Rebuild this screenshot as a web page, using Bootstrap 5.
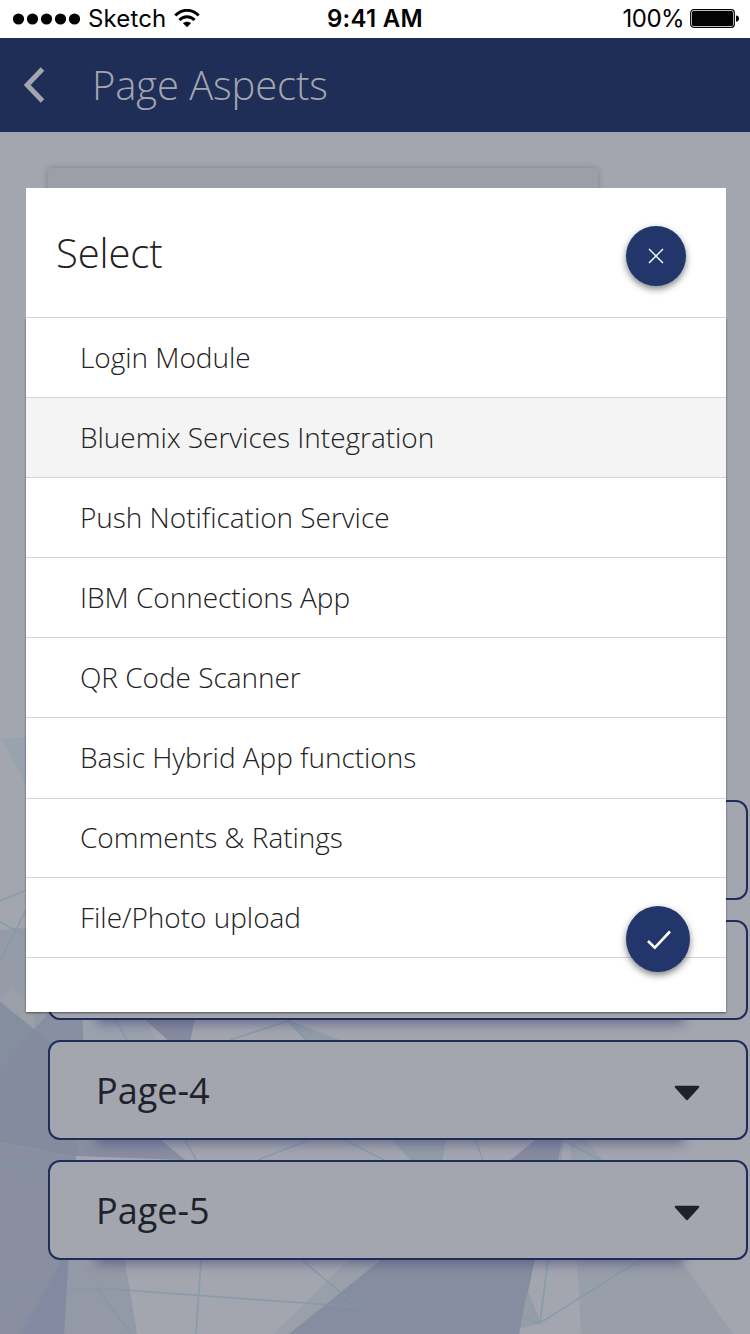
<!DOCTYPE html>
<html lang="en">
<head>
<meta charset="utf-8">
<meta name="viewport" content="width=device-width, initial-scale=1">
<title>Page Aspects</title>
<link href="https://cdn.jsdelivr.net/npm/bootstrap@5.3.0/dist/css/bootstrap.min.css" rel="stylesheet">
<style>
  body { font-family: "Open Sans", sans-serif; background: #a3a6af; }
  .screen { width: 750px; height: 1334px; }
  .status { height: 38px; font: 400 24px/38px Inter, sans-serif; color: #030303; padding: 0 11px 0 13px; }
  .status .carrier { letter-spacing: .15px; margin: 0 7px 0 8px; }
  .status .clock { left: 0; right: 0; font-weight: 600; letter-spacing: .3px; }
  .status .power { letter-spacing: -.55px; margin-right: 6px; }
  .titlebar { height: 94px; background: #1f2e57; color: #a3a6af; padding-left: 23px; }
  .titlebar h1 { font-size: 40px; font-weight: 300; line-height: 54px; letter-spacing: -.12px; margin: 0 0 0 47px; }
  .backdrop { left: 0; top: 0; width: 100%; height: 100%; }
  .content { height: 1202px; padding: 36px 2px 0 48px; }
  .preview { width: 550px; height: 612px; background: #9c9fa8; border-radius: 4px; box-shadow: 0 0 6px rgba(40,44,60,.28); margin-bottom: 20px; }
  .page-row { height: 100px; border: 2px solid #1f2e57; border-radius: 12px; background: #a3a6af; color: #1e222b; padding: 2px 46px 0 46px; font-size: 36px; }
  .page-row svg { margin-top: 3px; }
  .page-wrap { isolation: isolate; }
  .page-wrap::before { content: ""; position: absolute; z-index: -1; left: 48px; right: 64px; top: 30px; bottom: -4px; background: rgba(70,74,118,.6); filter: blur(6px); }
  .sheet { left: 26px; top: 188px; width: 700px; height: 824px; color: #222; }
  .sheet-head { height: 130px; background: #fff; border-bottom: 1px solid #d3d4d5; padding: 0 40px 0 30px; }
  .sheet-head h2 { font-size: 40px; font-weight: 300; line-height: 54px; letter-spacing: -.12px; margin: 0; }
  .sheet-body { height: 694px; background: #fff; box-shadow: 0 1px 2px rgba(0,0,0,.5); clip-path: inset(0 -4px -4px -4px); }
  .choice { height: 80px; border-bottom: 1px solid #d3d4d5; padding-left: 54px; font-size: 28px; font-weight: 300; line-height: 79px; letter-spacing: -.03px; font-variant-ligatures: common-ligatures; }
  .choice.tall { height: 81px; }
  .choice.short { height: 79px; line-height: 77px; }
  .choice.picked { background: #f4f4f4; }
  .fab { width: 60px; height: 60px; background: #23366b; border-radius: 50%; box-shadow: 0 3px 7px rgba(0,0,0,.5); }
  .fab-close { margin-top: 7px; }
  .fab-done { width: 64px; height: 66px; left: 600px; top: 718px; padding: 1px 0 0 1px; }
</style>
</head>
<body>
<div class="screen position-relative overflow-hidden d-flex flex-column">
  <!-- polygon artwork -->
  <svg class="backdrop position-absolute" viewBox="0 0 750 1334">
    <g>
      <path d="M2 739L26 737V784Z" fill="#98a3ae"/>
      <path d="M0 930L100 920V1060H0Z" fill="#969ca7"/>
      <path d="M83 1012H143L165 1060H83Z" fill="#9ba2ae"/>
      <path d="M0 1002L34 1029L0 1067Z" fill="#858e9f"/>
      <path d="M0 1000L34 1029V1012L12 985Z" fill="#9b9fa8"/>
      <path d="M0 1067L34 1029L50 1012H83V1130L76 1157L0 1142Z" fill="#858b9f"/>
      <path d="M34 1029L50 1012H83V1060H72Z" fill="#888fa3"/>
      <path d="M0 1142L76 1157L66 1334H0Z" fill="#898ea1"/>
      <path d="M65 1250H123L137 1334H62Z" fill="#9399a6"/>
      <path d="M62 1258L69 1250L64 1334H20Z" fill="#8389a0"/>
      <path d="M143 1018H195L190 1042H170Z" fill="#868ba0"/>
      <path d="M78 1135H155L185 1160L76 1156Z" fill="#888da1"/>
      <path d="M288 1020L345 1042H306Z" fill="#929ba8"/>
      <path d="M392 1140H446L442 1162H412Z" fill="#929ca8"/>
      <path d="M535 1140H562L558 1162H508Z" fill="#868ba0"/>
      <path d="M570 1140H588L603 1162H571Z" fill="#98a0aa"/>
      <path d="M350 1259H385L290 1334H273Z" fill="#99a0aa"/>
      <path d="M382 1259H535L519 1334H289Z" fill="#868da0"/>
      <path d="M577 1259H680L733 1334H581Z" fill="#999fa9"/>
      <path d="M527 1293L541 1323L520 1329Z" fill="#959da8"/>
    </g>
    <g fill="none" stroke="#7f98ac" stroke-width="1.7" opacity=".7">
      <path d="M0 901L26 890M0 922L26 936M0 961L26 910M0 1166L50 1169M116 1020L127 1041M230 1040L288 1021L306 1040M185 1140L197 1161M258 1160L311 1139M343 1139L384 1160M475 1139L483 1160M563 1139L560 1160M563 1140L602 1161"/>
      <path d="M97 1288L358 1307L302 1260M97 1288L131 1334M201 1260L196 1334M548 1259L540 1323L640 1260"/>
      <path opacity=".5" d="M0 1296L97 1288M60 1262L22 1334M358 1307L375 1280M527 1290L540 1323L523 1317"/>
    </g>
  </svg>

  <div class="status bg-white d-flex align-items-center position-relative">
    <svg width="67" height="12" viewBox="0 0 67 12"><g fill="#030303"><circle cx="5.5" cy="6" r="5.6"/><circle cx="19.5" cy="6" r="5.6"/><circle cx="33.5" cy="6" r="5.6"/><circle cx="47.5" cy="6" r="5.6"/><circle cx="61.5" cy="6" r="5.6"/></g></svg>
    <span class="carrier">Sketch</span>
    <svg width="28" height="20" viewBox="0 0 28 20"><g fill="none" stroke="#030303" stroke-width="2.9"><path d="M2.3 6.6C9 -.5 19 -.5 25.7 6.6"/><path d="M6.4 11.1C10.5 6.6 17.5 6.6 21.6 11.1"/></g><path d="M10 14.3C12 12.3 16 12.3 18 14.3L14 18.2Z" fill="#030303"/></svg>
    <span class="clock position-absolute text-center">9:41 AM</span>
    <span class="power ms-auto">100%</span>
    <svg width="49" height="20" viewBox="0 0 49 20"><rect x=".7" y=".7" width="43.6" height="17.6" rx="3" fill="none" stroke="#030303" stroke-width="1.2"/><rect x="2" y="2" width="41" height="15" rx="1.5" fill="#030303"/><path d="M46 6.5C48 6.5 49 7.5 49 9.5S48 12.7 46 12.7Z" fill="#030303"/></svg>
  </div>

  <header class="titlebar d-flex align-items-center position-relative">
    <svg width="22" height="36" viewBox="0 0 22 36"><path d="M19.5 2L4.2 18L19.5 34" fill="none" stroke="#a3a6af" stroke-width="5"/></svg>
    <h1>Page Aspects</h1>
  </header>

  <main class="content position-relative">
    <div class="preview"></div>
    <div class="d-grid" style="gap:20px">
      <div class="page-wrap position-relative"><div class="page-row"></div></div>
      <div class="page-wrap position-relative"><div class="page-row"></div></div>
      <div class="page-wrap position-relative"><div class="page-row d-flex align-items-center justify-content-between"><span>Page-4</span><svg width="26" height="18" viewBox="0 0 26 18"><path d="M2 3H24L13 15Z" fill="#1e222b" stroke="#1e222b" stroke-width="2.5" stroke-linejoin="round"/></svg></div></div>
      <div class="page-wrap position-relative"><div class="page-row d-flex align-items-center justify-content-between"><span>Page-5</span><svg width="26" height="18" viewBox="0 0 26 18"><path d="M2 3H24L13 15Z" fill="#1e222b" stroke="#1e222b" stroke-width="2.5" stroke-linejoin="round"/></svg></div></div>
    </div>
  </main>

  <section class="sheet position-absolute">
    <div class="sheet-head d-flex align-items-center justify-content-between">
      <h2>Select</h2>
      <button class="fab fab-close border-0 p-0 d-flex align-items-center justify-content-center"><svg width="16" height="16" viewBox="0 0 16 16"><path d="M1 1L15 15M15 1L1 15" stroke="#fff" stroke-width="1.4"/></svg></button>
    </div>
    <div class="sheet-body">
      <div class="choice">Login Module</div>
      <div class="choice picked">Bluemix Services Integration</div>
      <div class="choice">Push Notification Service</div>
      <div class="choice">IBM Connections App</div>
      <div class="choice">QR Code Scanner</div>
      <div class="choice tall">Basic Hybrid App functions</div>
      <div class="choice short">Comments &amp; Ratings</div>
      <div class="choice">File/Photo upload</div>
    </div>
    <button class="fab fab-done position-absolute border-0 d-flex align-items-center justify-content-center"><svg width="26" height="22" viewBox="0 0 26 22"><path d="M2 12L8.8 18.7L24 2.5" fill="none" stroke="#fff" stroke-width="2.6"/></svg></button>
  </section>
</div>
<script src="https://cdn.jsdelivr.net/npm/bootstrap@5.3.0/dist/js/bootstrap.bundle.min.js"></script>
</body>
</html>
